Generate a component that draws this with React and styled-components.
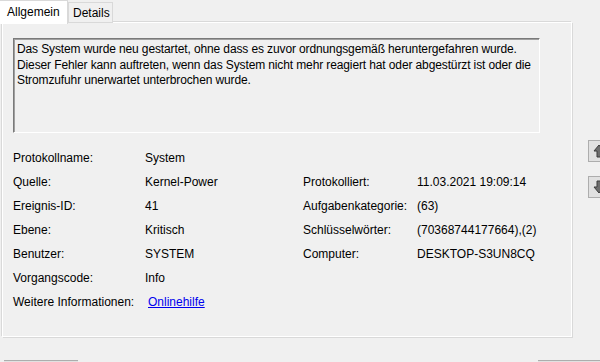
import React from "react";
import styled, { createGlobalStyle } from "styled-components";

const GlobalStyle = createGlobalStyle`
  body {
    margin: 0;
    background: #f0f0f0;
    font-family: "Liberation Sans", Arial, sans-serif;
  }
`;

const leftRows = [
  ["Protokollname:", "System"],
  ["Quelle:", "Kernel-Power"],
  ["Ereignis-ID:", "41"],
  ["Ebene:", "Kritisch"],
  ["Benutzer:", "SYSTEM"],
  ["Vorgangscode:", "Info"],
];

const rightRows = [
  null,
  ["Protokolliert:", "11.03.2021 19:09:14"],
  ["Aufgabenkategorie:", "(63)"],
  ["Schlüsselwörter:", "(70368744177664),(2)"],
  ["Computer:", "DESKTOP-S3UN8CQ"],
  null,
];

const ArrowIcon = ({ down }) => (
  <svg width="14" height="14" viewBox="0 0 14 14">
    <path
      d={down ? "M5 1h4v6h3l-5 6-5-6h3z" : "M5 13h4V7h3L7 1 2 7h3z"}
      fill="#6e6e6e"
      stroke="#3c3c3c"
      strokeWidth="1"
    />
  </svg>
);

const App = () => {
  return (
    <Window>
      <GlobalStyle />
      <TopArea>
        <Main>
          <TabStrip>
            <Tab active>Allgemein</Tab>
            <Tab>Details</Tab>
          </TabStrip>
          <Panel>
            <Description>
              Das System wurde neu gestartet, ohne dass es zuvor ordnungsgemäß
              heruntergefahren wurde. Dieser Fehler kann auftreten, wenn das
              System nicht mehr reagiert hat oder abgestürzt ist oder die
              Stromzufuhr unerwartet unterbrochen wurde.
            </Description>
            <InfoGrid>
              {leftRows.map((row, i) => (
                <React.Fragment key={i}>
                  <Label>{row[0]}</Label>
                  <Value>{row[1]}</Value>
                  <Label>{rightRows[i] ? rightRows[i][0] : ""}</Label>
                  <Value>{rightRows[i] ? rightRows[i][1] : ""}</Value>
                </React.Fragment>
              ))}
              <Label>Weitere Informationen:</Label>
              <Value>
                <HelpLink href="#">Onlinehilfe</HelpLink>
              </Value>
            </InfoGrid>
          </Panel>
        </Main>
        <SideButtons>
          <ArrowButton>
            <ArrowIcon />
          </ArrowButton>
          <ArrowButton>
            <ArrowIcon down />
          </ArrowButton>
        </SideButtons>
      </TopArea>
      <Footer>
        <FooterButton width="74px" />
        <FooterButton width="62px" />
      </Footer>
    </Window>
  );
};

const Window = styled.div`
  width: 600px;
  height: 362px;
  overflow: hidden;
  display: flex;
  flex-direction: column;
  background: #f0f0f0;
  color: #000;
  font-size: 12px;
`;

const TopArea = styled.div`
  display: flex;
  align-items: flex-start;
`;

const Main = styled.div`
  width: 572px;
  flex-shrink: 0;
  display: flex;
  flex-direction: column;
`;

const TabStrip = styled.div`
  display: flex;
  align-items: flex-start;
  height: 23px;
  margin-bottom: -1px;
  position: relative;
  z-index: 1;
`;

const Tab = styled.div`
  box-sizing: border-box;
  height: ${(p) => (p.active ? "24px" : "21px")};
  margin-top: ${(p) => (p.active ? "0" : "2px")};
  width: ${(p) => (p.active ? "68px" : "45px")};
  padding: ${(p) => (p.active ? "3px 0 0 7px" : "2px 0 0 4px")};
  background: ${(p) => (p.active ? "#ffffff" : "#f0f0f0")};
  border: 1px solid #d9d9d9;
  border-left: ${(p) => (p.active ? "none" : "1px solid #d9d9d9")};
  border-bottom: ${(p) => (p.active ? "none" : "1px solid #d9d9d9")};
  font-size: 12px;
  line-height: 16px;
`;

const Panel = styled.div`
  box-sizing: border-box;
  height: 315px;
  margin-left: 2px;
  border: 1px solid #ffffff;
  box-shadow: 1px 1px 0 #d9d9d9, -1px -1px 0 #d9d9d9;
  background: #f0f0f0;
  padding: 15px 0 0 10px;
`;

const Description = styled.div`
  box-sizing: border-box;
  width: 527px;
  height: 95px;
  border-top: 1px solid #7a7a7a;
  border-left: 1px solid #7a7a7a;
  border-right: 1px solid #ffffff;
  border-bottom: 1px solid #ffffff;
  box-shadow: inset 1px 1px 0 #a0a0a0;
  padding: 3px 2px 2px 3px;
  line-height: 15.5px;
  font-size: 12px;
  letter-spacing: -0.12px;
`;

const InfoGrid = styled.div`
  display: grid;
  grid-template-columns: 132px 158px 114px 1fr;
  grid-auto-rows: 24px;
  align-items: center;
  margin-top: 13px;
`;

const Label = styled.div`
  white-space: nowrap;
`;

const Value = styled.div`
  white-space: nowrap;
`;

const HelpLink = styled.a`
  color: #0000ee;
  text-decoration: underline;
  margin-left: 3px;
`;

const SideButtons = styled.div`
  display: flex;
  flex-direction: column;
  gap: 14px;
  margin-top: 140px;
  margin-left: 16px;
  flex-shrink: 0;
`;

const ArrowButton = styled.div`
  box-sizing: border-box;
  width: 24px;
  height: 22px;
  border: 1px solid #adadad;
  background: #e1e1e1;
  display: flex;
  align-items: center;
  padding-left: 3px;
`;

const Footer = styled.div`
  display: flex;
  justify-content: space-between;
  padding: 23px 0 0 4px;
`;

const FooterButton = styled.div`
  width: ${(p) => p.width};
  height: 10px;
  border-top: 1px solid #adadad;
  background: #e1e1e1;
`;

export default App;
